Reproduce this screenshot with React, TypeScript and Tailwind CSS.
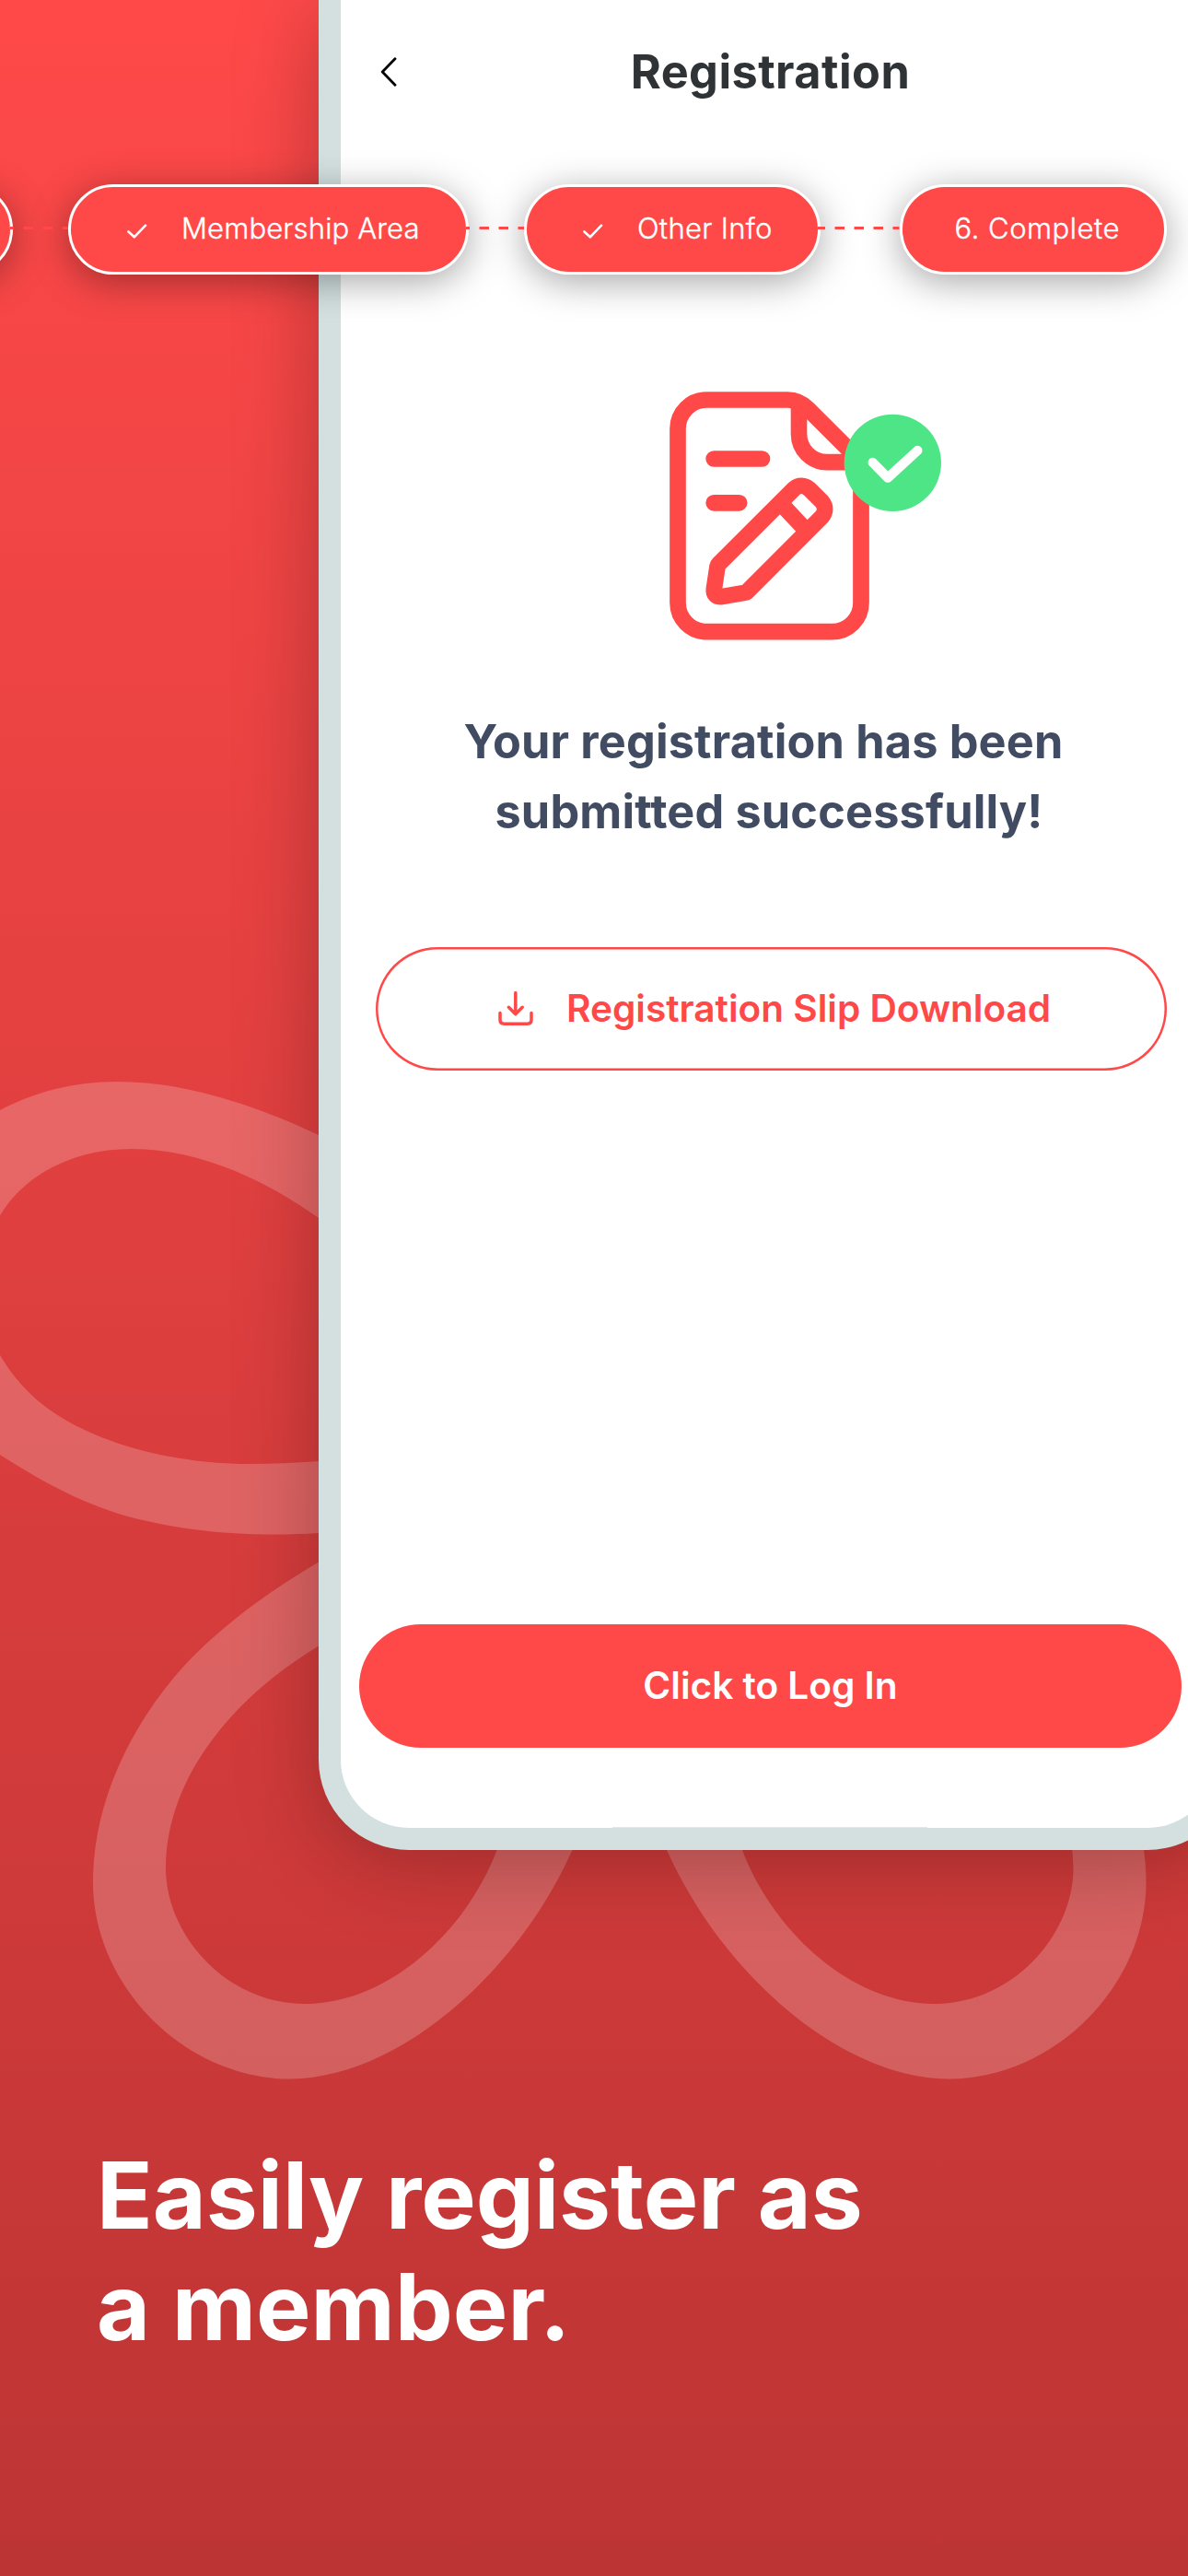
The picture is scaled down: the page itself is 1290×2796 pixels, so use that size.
import type { ReactNode } from "react";

function Petals() {
  return (
    <>
      <path
        fillRule="evenodd"
        d="M346 1232 C272 1197 196 1174 128 1174 C80 1174 38 1185 0 1205 C-55 1240 -90 1310 -88 1390 C-86 1480 -50 1550 0 1579 C50 1611 104 1640 160 1651 C215 1664 280 1668 346 1664 L500 1650 L500 1560 L346 1586 C320 1588 295 1589 270 1589 C210 1589 150 1577 103 1557 C65 1541 28 1518 0 1471 C-22 1430 -22 1362 0 1319.500 C28 1272 84 1247 143 1247 C215 1247 285 1279 346 1322 L500 1440 L500 1310 Z"
      />
      <path
        fillRule="evenodd"
        d="M346 1695.600 C291 1728 240 1765 200 1808 C135 1880 101 1965 101 2043 C101 2155 200 2256 315 2256.500 C430 2256 560 2145 621.500 2008 L660 1800 L580 1800 L539.500 2008 C509 2090 426 2175 330 2175 C243 2174 180 2098 180 2028 C180 1935 246 1847 346 1786.600 L500 1710 L500 1620 Z"
      />
    </>
  );
}

function Backdrop() {
  return (
    <svg className="absolute inset-0" width="1290" height="2796" viewBox="0 0 1290 2796" fill="#fff" fillOpacity="0.2" aria-hidden="true">
      <Petals />
      <g transform="translate(1345.5 0) scale(-1 1)">
        <Petals />
      </g>
    </svg>
  );
}

function Step({ className, done, children }: { className: string; done?: boolean; children?: ReactNode }) {
  return (
    <div
      className={`flex h-[98px] shrink-0 items-center rounded-full border-[3px] border-white bg-[#ff4848] text-[31px] leading-none font-light text-white shadow-[0_8px_40px_rgba(0,0,0,0.35)] ${className}`}
    >
      {done && (
        <svg className="mt-[3px] mr-[37px] shrink-0" width="22" height="16" viewBox="0 0 22 16" fill="none" stroke="#fff" strokeWidth="2.6" strokeLinecap="round" strokeLinejoin="round">
          <path d="M1.500 8.500 L7.800 14.300 L20 1.700" />
        </svg>
      )}
      <span className="-mt-[3px] whitespace-nowrap [-webkit-text-stroke:0.4px_#fff]">{children}</span>
    </div>
  );
}

function Connector({ className, length, offset }: { className: string; length: number; offset: number }) {
  return (
    <svg className={`relative z-10 -mt-[3px] -ml-[3px] shrink-0 ${className}`} height="3" viewBox={`0 0 ${length} 3`} aria-hidden="true">
      <line x1="0" y1="1.500" x2={length} y2="1.500" stroke="#ff4848" strokeWidth="3" strokeDasharray="10.5 10.5" strokeDashoffset={offset} />
    </svg>
  );
}

function Stepper() {
  return (
    <div className="absolute top-[200px] -left-[286px] z-10 flex items-center">
      <Step className="w-[300px]" />
      <Connector className="w-[63px]" length={63} offset={6.5} />
      <Step className="w-[435px] pl-[61px] tracking-[0.15px]" done>Membership Area</Step>
      <Connector className="w-[63px]" length={63} offset={6.5} />
      <Step className="w-[322px] pl-[61px] tracking-[0.33px]" done>Other Info</Step>
      <Connector className="w-[88.500px]" length={88.5} offset={2.5} />
      <Step className="w-[290px] pl-[57px] tracking-[0.5px]">6. Complete</Step>
    </div>
  );
}

function DocumentIcon() {
  return (
    <svg className="mt-[270px] ml-[356.700px]" width="295.333" height="270" viewBox="80 75 886 810" fill="none" stroke="#ff4848" strokeWidth="53" strokeLinecap="round" strokeLinejoin="round">
      <path d="M465 102 H201 A94 94 0 0 0 107 196 V763 A94 94 0 0 0 201 857 H610 A94 94 0 0 0 704 763 V342 C704 312 696 296 676 276 L531 131 C512 112 492 102 465 102 Z" />
      <path d="M501.500 118 V212 A92 93 0 0 0 593.500 305 H680" strokeLinecap="butt" />
      <path d="M224.500 294 H381.500 M224.500 437.500 H307" />
      <path d="M240 637 L485 392 Q510 371 536 393 L576 433 Q596 458 576 483 L334 725 Q331 729 324 730 L250 743 Q222 744 225 718 L236 645 Q237 640 240 637 Z" />
      <path d="M446 443 L523 525" strokeLinecap="butt" />
      <circle cx="807" cy="307" r="158" fill="#4ee586" stroke="none" />
      <path d="M742 306 L791 356 L888 267" stroke="#fff" strokeWidth="31" />
    </svg>
  );
}

function Phone() {
  return (
    <main className="relative ml-[346px] flex h-[2008px] w-[998px] shrink-0 flex-col rounded-b-[98px] border-x-[24px] border-b-[24px] border-[#d4e0e0] bg-white pr-[17px] shadow-[0_12px_92px_rgba(0,0,0,0.26)]">
      <header className="flex h-[156px] items-center pl-[43px]">
        <svg width="18" height="32" viewBox="0 0 18 32" fill="none" stroke="#000" strokeWidth="2.800" strokeLinecap="round" strokeLinejoin="round">
          <path d="M16 1.800 L2.200 16 L16 30.200" />
        </svg>
        <h1 className="flex-1 pr-[61px] text-center text-[50.400px] leading-none font-bold tracking-[0.45px] text-[#2f3336]">Registration</h1>
      </header>
      <div className="-mt-px">
        <DocumentIcon />
      </div>
      <p className="mt-[72px] mr-[3px] h-[151.400px] text-center text-[50.400px] leading-[75.700px] font-bold tracking-[0.16px] whitespace-nowrap text-[#414c63]">
        Your registration has been&nbsp;
        <br />
        submitted successfully!
      </p>
      <button className="mt-[109.600px] ml-[38px] flex h-[134px] w-[859px] shrink-0 items-center rounded-full pl-[132.500px] text-[40.600px] leading-none font-semibold text-[#ff4848] shadow-[inset_0_0_0_2.5px_#ff4848]">
        <svg className="mr-[36.500px] shrink-0" width="38" height="37" viewBox="0 0 38 37" fill="none" stroke="currentColor" strokeWidth="3.500" strokeLinecap="round" strokeLinejoin="round">
          <path d="M18.800 1.700 V24.500 M11.400 17.300 L18.800 24.700 L26.200 17.300 M2 23.500 V31 Q2 35.200 6.500 35.200 H31.500 Q36 35.200 36 31 V23.500" />
        </svg>
        <span className="whitespace-nowrap">Registration Slip Download</span>
      </button>
      <button className="mt-[601.500px] ml-[20px] flex h-[134px] w-[893px] shrink-0 items-center justify-center rounded-full bg-[#ff4848] text-[40.600px] leading-none font-semibold text-white">
        <span className="whitespace-nowrap">Click to Log In</span>
      </button>
      <div className="mt-auto ml-[295px] h-px w-[342px] shrink-0 bg-[#e0e8e8]" />
    </main>
  );
}

export default function App() {
  return (
    <div className="relative flex h-[2796px] w-[1290px] flex-col overflow-hidden bg-linear-to-b from-[#ff4949] to-[#bd3434] font-['Inter',sans-serif]">
      <Backdrop />
      <Phone />
      <Stepper />
      <h2 className="relative mt-[314px] ml-[105px] text-[100px] leading-[121px] font-bold whitespace-nowrap text-white">
        Easily register as
        <br />
        a member.
      </h2>
    </div>
  );
}
